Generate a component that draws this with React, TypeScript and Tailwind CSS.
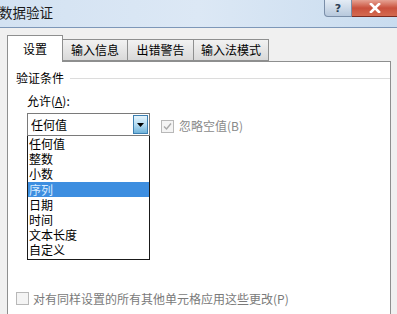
import React from "react";

const items = ["任何值", "整数", "小数", "序列", "日期", "时间", "文本长度", "自定义"];

function Check({ checked }: { checked?: boolean }) {
  return (
    <div className="w-[13px] h-[13px] border border-[#b8b8b8] bg-[#f4f4f4] flex items-center justify-center">
      {checked && (
        <svg width="9" height="9" viewBox="0 0 9 9">
          <path d="M1 4.5 L3.5 7 L8 1.5" stroke="#a8a8a8" strokeWidth="1.4" fill="none" />
        </svg>
      )}
    </div>
  );
}

export default function App() {
  return (
    <div
      className="w-[397px] h-[314px] overflow-hidden bg-[#f0f0f0] text-[12px] text-black flex flex-col"
      style={{ fontFamily: '"Noto Sans CJK SC", "Microsoft YaHei", sans-serif' }}
    >
      <div className="h-[28px] shrink-0 flex items-start justify-between bg-gradient-to-r from-[#d3e2f2] via-[#dce8f5] to-[#c9dcef] border-b border-[#7d97b8]">
        <div className="text-[13.5px] text-[#1a1a1a] mt-[6px] -ml-[1px] leading-none">数据验证</div>
        <div className="flex">
          <div className="w-[28px] h-[17px] border border-[#7a8ea8] border-t-0 rounded-bl-[4px] bg-gradient-to-b from-[#e4ecf5] to-[#b7c8dc] flex items-center justify-center text-[11px] font-bold text-[#2c3e55] leading-none" style={{ fontFamily: '"DejaVu Sans", sans-serif' }}>
            ?
          </div>
          <div className="w-[45px] h-[17px] border-b border-[#7a2a20] bg-gradient-to-b from-[#e5a293] via-[#c9503c] to-[#d46a50] flex items-center justify-center">
            <svg width="12" height="10" viewBox="0 0 12 10">
              <path d="M2 1 L10 9 M10 1 L2 9" stroke="#ffffff" strokeWidth="2.6" strokeLinecap="square" />
            </svg>
          </div>
        </div>
      </div>
      <div className="flex-1 flex flex-col pl-[7px] pr-[6px] pt-[6px]">
        <div className="flex items-end h-[27px] relative z-10">
          <div className="w-[56px] h-[27px] bg-white border border-[#8e8f8f] border-b-0 flex items-center justify-center -mb-[1px] pb-[1px]">
            设置
          </div>
          <div className="w-[65px] h-[22px] border border-[#8e8f8f] border-l-0 bg-gradient-to-b from-[#f2f2f2] to-[#d9d9d9] flex items-center justify-center">
            输入信息
          </div>
          <div className="w-[66px] h-[22px] border border-[#8e8f8f] border-l-0 bg-gradient-to-b from-[#f2f2f2] to-[#d9d9d9] flex items-center justify-center">
            出错警告
          </div>
          <div className="w-[75px] h-[22px] border border-[#8e8f8f] border-l-0 bg-gradient-to-b from-[#f2f2f2] to-[#d9d9d9] flex items-center justify-center">
            输入法模式
          </div>
        </div>
        <div className="flex-1 bg-white border border-[#8e8f8f] border-b-0 flex flex-col pl-[8px] pt-[8px]">
          <div className="flex items-center gap-[6px] h-[16px]">
            <span>验证条件</span>
            <div className="flex-1 h-px bg-[#dcdcdc]" />
          </div>
          <div className="pl-[11px] mt-[9px] leading-none h-[14px]">
            允许(<span className="underline">A</span>):
          </div>
          <div className="flex items-start mt-[4px] pl-[11px]">
            <div className="flex flex-col">
              <div className="w-[123px] h-[23px] border border-[#7a7a7a] flex items-center justify-between pl-[3px] pr-[1px]">
                <span>任何值</span>
                <div className="w-[15px] h-[19px] border border-[#3c7fb1] bg-gradient-to-b from-[#e5f4fc] via-[#b5dcf2] to-[#6fb3da] flex items-center justify-center">
                  <svg width="7" height="4" viewBox="0 0 7 4">
                    <path d="M0 0 L7 0 L3.5 4 Z" fill="#000" />
                  </svg>
                </div>
              </div>
              <div className="w-[123px] border border-[#1a1a1a] border-t-0 flex flex-col pb-[1px]">
                {items.map((it) => (
                  <div
                    key={it}
                    className={
                      "h-[15.2px] leading-[15px] pl-[1px] " +
                      (it === "序列" ? "bg-[#3d8ee0] text-[#d8ecff]" : "")
                    }
                  >
                    {it}
                  </div>
                ))}
              </div>
            </div>
            <div className="flex items-center gap-[5px] ml-[11px] mt-[4px]">
              <Check checked />
              <span className="text-[#8a8a8a]">忽略空值(B)</span>
            </div>
          </div>
          <div className="flex items-center gap-[4px] mt-[30px]">
            <Check />
            <span className="text-[#7a7a7a]">对有同样设置的所有其他单元格应用这些更改(P)</span>
          </div>
        </div>
      </div>
    </div>
  );
}
